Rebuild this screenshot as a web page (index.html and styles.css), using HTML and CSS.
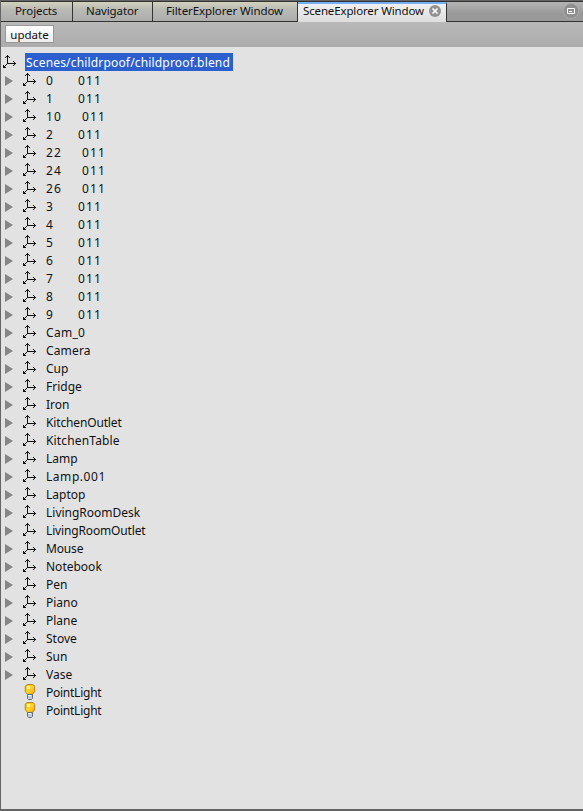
FILE: index.html
```html
<!DOCTYPE html>
<html lang="en">
<head>
<meta charset="utf-8">
<title>SceneExplorer Window</title>
<link rel="stylesheet" href="styles.css">
</head>
<body>
<svg class="defs" width="0" height="0">
  <defs>
    <g id="axes" shape-rendering="crispEdges" fill="#111">
      <path d="M5 1h1v9h-1zM4 2h3v1h-3zM3 3h1v1h-1zM7 3h1v1h-1zM5 9h9v1h-9zM12 8h1v3h-1zM11 7h1v1h-1zM11 11h1v1h-1zM4 10h1v1h-1zM3 11h1v1h-1zM2 12h1v1h-1zM1 11h1v3h-1zM1 13h3v1h-3z"/>
    </g>
    <linearGradient id="glow" x1="0" y1="0" x2="1" y2="1">
      <stop offset="0" stop-color="#ffc400"/>
      <stop offset=".5" stop-color="#ffd42a"/>
      <stop offset="1" stop-color="#ff9f00"/>
    </linearGradient>
    <g id="bulb">
      <path d="M5.500 10.500L3.300 7.500V2.500Q4 .5 6 .5h4Q12 .5 12.700 2.500v5l-2.200 3z" fill="url(#glow)" stroke="#b5832a"/>
      <path d="M5 2h3v3H5z" fill="#fff6a8"/>
      <path d="M5.500 10.500h5v4l-1 1h-3l-1-1z" fill="#c3ccd6" stroke="#5f6d7c"/>
      <path d="M6 11.500h3" stroke="#fff"/>
    </g>
  </defs>
</svg>
<div class="window">
  <nav class="tabs">
    <div class="tab projects">Projects</div>
    <div class="tab navigator">Navigator</div>
    <div class="tab filter">FilterExplorer Window</div>
    <div class="tab active"><span>SceneExplorer Window</span>
      <svg width="12" height="12" viewBox="0 0 12 12"><circle cx="6" cy="6" r="6" fill="#929292"/><path d="M3.500 3.500l5 5m0-5l-5 5" stroke="#fff" stroke-width="1.700"/></svg>
    </div>
    <div class="rest">
      <svg width="16" height="16" viewBox="0 0 16 16"><circle cx="8" cy="8" r="7.500" fill="#8e8e8e" stroke="#aaa"/><path d="M4.500 5.500h7v5h-7z" fill="none" stroke="#fff"/><path d="M6 8.500h3" stroke="#fff"/></svg>
    </div>
  </nav>
  <div class="toolbar"><button class="update">update</button></div>
  <main class="tree">
    <div class="row root"><svg class="icon" width="16" height="16"><use href="#axes"/></svg><span class="selected">Scenes/childrpoof/childproof.blend</span></div>
    <div id="nodes"></div>
  </main>
</div>
<script src="tree.js"></script>
</body>
</html>
```
FILE: tree.js
```js
const numbered = ["0", "1", "10", "2", "22", "24", "26", "3", "4", "5", "6", "7", "8", "9"];
const named = ["Cam_0", "Camera", "Cup", "Fridge", "Iron", "KitchenOutlet", "KitchenTable", "Lamp", "Lamp.001", "Laptop", "LivingRoomDesk", "LivingRoomOutlet", "Mouse", "Notebook", "Pen", "Piano", "Plane", "Stove", "Sun", "Vase"];
const lights = ["PointLight", "PointLight"];

const spacing = {
  Cam_0: "loose", "Lamp.001": "looser", KitchenOutlet: "tight", LivingRoomOutlet: "tight",
  Mouse: "tight", PointLight: "tighter", KitchenTable: "open", Camera: "open"
};

const row = (name, icon, layer) => {
  const classes = ["name", layer && "number", layer && name.length === 2 && "wide", spacing[name]];
  return `<div class="row">
  <svg class="arrow" width="8" height="10">${icon === "axes" ? '<path d="M0 0l8 5-8 5z" fill="#858585"/>' : ""}</svg>
  <svg class="icon" width="16" height="16"><use href="#${icon}"/></svg>
  <span class="${classes.filter(Boolean).join(" ")}">${name}</span>${layer ? `<span class="layer">${layer}</span>` : ""}
</div>`;
};

document.getElementById("nodes").innerHTML = [
  ...numbered.map(n => row(n, "axes", "011")),
  ...named.map(n => row(n, "axes")),
  ...lights.map(n => row(n, "bulb"))
].join("");
```
FILE: styles.css
```css
* { box-sizing: border-box; }
body { margin: 0; font: 12px/18px "Noto Sans", sans-serif; color: #111; }
.defs { position: absolute; }
.window {
  height: 811px;
  border: 1px solid #646464;
  border-width: 1px 0 2px 1px;
  background: #e2e2e2;
  display: flex;
  flex-direction: column;
  overflow: hidden;
}
.tabs { display: flex; height: 21px; border-top: 1px solid #333; font-size: 11.5px; letter-spacing: -.1px; }
.tab {
  height: 20px;
  border-right: 1px solid #333;
  border-bottom: 1px solid #333;
  background: linear-gradient(#d2d2bd, #b9b9b5 40%, #adadad);
  white-space: nowrap;
  line-height: 18px;
}
.projects { width: 72px; padding-left: 14px; }
.navigator { width: 80px; padding-left: 13px; }
.filter { width: 145px; padding-left: 13px; }
.active {
  width: 149px;
  padding-left: 5px;
  display: flex;
  background: linear-gradient(#f0f0f0, #dedede);
  border-top: 2px solid #76aff5;
  border-bottom: 0;
  line-height: 14px;
  letter-spacing: -.14px;
}
.active span { width: 126px; }
.active svg { margin-top: 1px; }
.rest {
  flex: 1;
  height: 20px;
  display: flex;
  justify-content: flex-end;
  padding: 1px 4px 0 0;
  background: linear-gradient(#b5b5b5, #999 60%);
  border-bottom: 1px solid #333;
}
.toolbar { height: 25px; padding: 3px 4px; background: linear-gradient(#b9b9b9, #acacac); }
.update {
  display: block;
  width: 49px;
  height: 18px;
  padding: 0;
  border: 1px solid #999;
  background: linear-gradient(#fff, #ececec);
  font: 11.5px/15px "Noto Sans", sans-serif;
  color: #111;
}
.tree { padding-top: 6px; }
.row { display: flex; height: 18px; align-items: center; padding-left: 4px; white-space: nowrap; }
.root { padding-left: 1px; }
.arrow { margin: 1px 9px 0 0; }
.icon { flex: none; }
.name, .layer { padding-top: 2px; }
.name { margin-left: 8px; }
.number { width: 32px; }
.number.wide { width: 36px; }
.number, .layer { letter-spacing: 1.1px; }
.tight { letter-spacing: -.15px; }
.tighter { letter-spacing: -.25px; }
.open { letter-spacing: .15px; }
.loose { letter-spacing: .3px; }
.looser { letter-spacing: .55px; }
.selected {
  margin-left: 7px;
  width: 208px;
  height: 18px;
  padding-left: 1px;
  line-height: 20px;
  letter-spacing: .17px;
  background: #2b5fce;
  color: #fff;
}
```
